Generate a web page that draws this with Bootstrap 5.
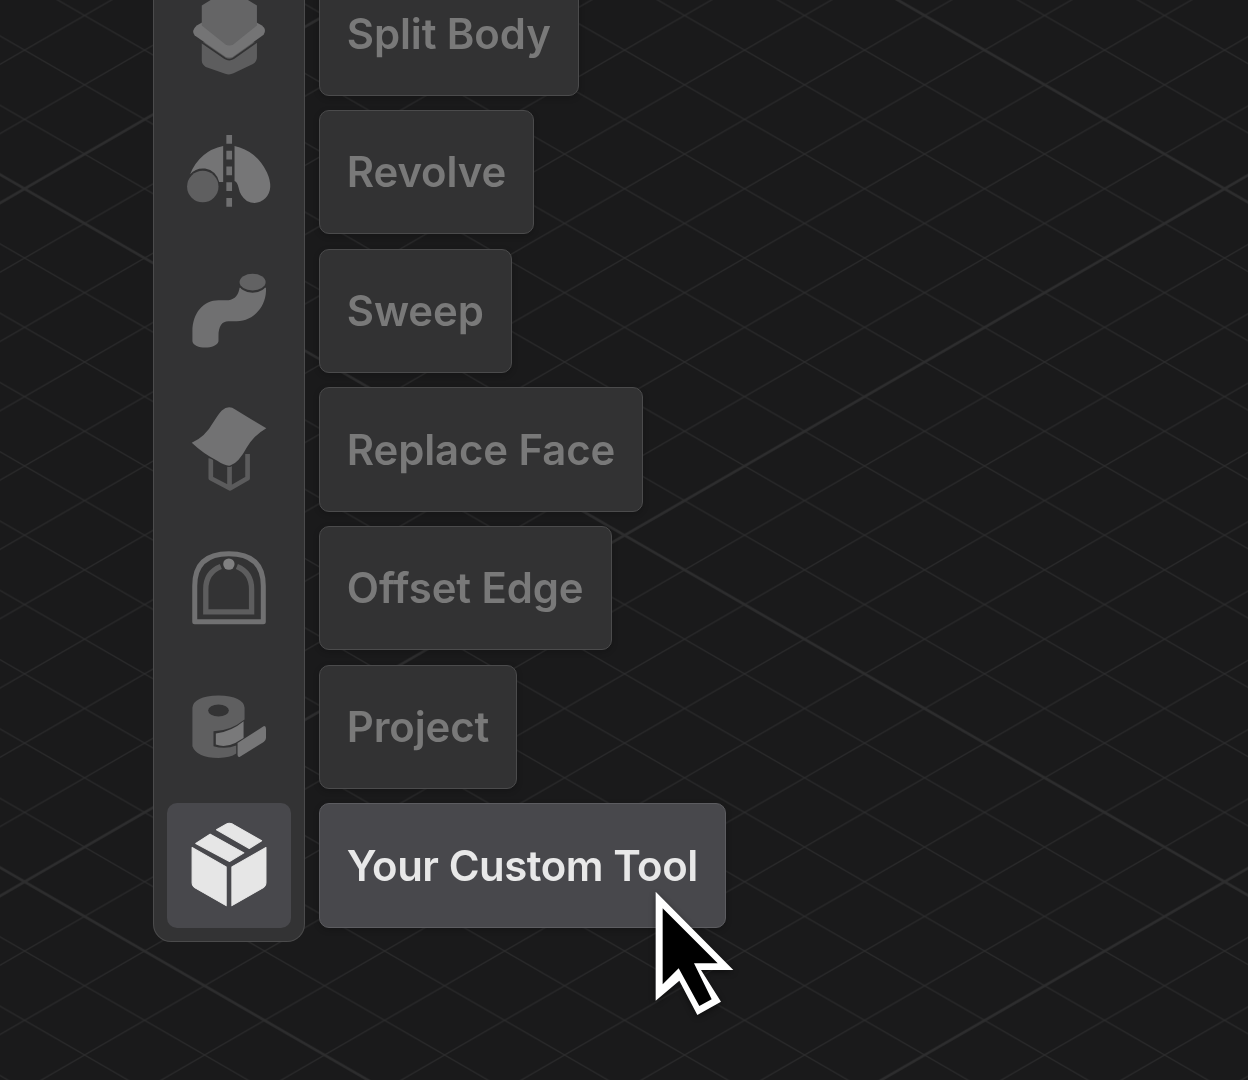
<!doctype html>
<html lang="en"><head>
<meta charset="utf-8"/><meta name="viewport" content="width=device-width,initial-scale=1"/>
<title>Tool menu</title>
<link href="https://cdn.jsdelivr.net/npm/bootstrap@5.3.2/dist/css/bootstrap.min.css" rel="stylesheet">
<style>
html,body{height:100%}
body{background:#1a1a1b;overflow:hidden;font-family:Inter,"Liberation Sans",sans-serif}
.iso-bg{position:fixed;inset:0;width:100%;height:100%;z-index:0}
.tool-stage{position:relative;z-index:1;margin-top:-41.7px;margin-left:153px;gap:14.3px}
.tool-rail{width:152px;padding:13px;gap:14.27px;background:#333334;border:1px solid #4b4b4c;border-top:0;border-radius:0 0 18px 18px}
.rail-slot{width:124.4px;height:124.4px;border-radius:10px}
.rail-slot svg{width:124.4px;height:124.4px}
.rail-slot.is-on{background:#48484c}
.tool-labels{padding-top:13px;gap:14.27px}
.tool-tag{height:124.4px;padding:1px 27px 0 26.5px;background:#323233;border:1px solid #4b4b4c;border-radius:10px;color:#797979;font-size:41.9px;font-weight:600;letter-spacing:-.1px;white-space:nowrap;box-shadow:0 2px 6px rgba(0,0,0,.2)}
.tool-tag.is-on{background:#48484c;border-color:#5c5c60;color:#e8e8e8;letter-spacing:-.45px}
.pointer-mark{position:absolute;left:650px;top:889px;z-index:2;width:90px;height:130px;filter:drop-shadow(0 2px 3px rgba(0,0,0,.45))}
</style>
</head><body>
<svg class="iso-bg" viewBox="0 0 1248 1080" aria-hidden="true">
  <defs>
    <pattern id="isoMinor" width="120" height="69.3" patternUnits="userSpaceOnUse" patternTransform="translate(84.6 15.5)">
      <path d="M0 0L120 69.3M0 69.3L120 0" stroke="#2b2b2c" stroke-width="1.2" fill="none"/>
    </pattern>
    <pattern id="isoMajor" width="1200" height="693" patternUnits="userSpaceOnUse" patternTransform="translate(24.6 188.75)">
      <path d="M0 0L1200 693M0 693L1200 0" stroke="#2d2d2e" stroke-width="2.4" fill="none"/>
    </pattern>
  </defs>
  <rect width="1248" height="1080" fill="url(#isoMinor)"/>
  <rect width="1248" height="1080" fill="url(#isoMajor)"/>
</svg>

<div class="tool-stage d-flex align-items-start">
  <div class="tool-rail d-flex flex-column">
    <div class="rail-slot d-flex align-items-center justify-content-center">
      <svg viewBox="51 -83 372 372"><path d="M155 130V185Q155 197 167 204L225 224Q237 229 250 223L308 195Q320 188 320 175V130Z" fill="#5d5d5e"/><path d="M140 80L228 30Q237 26 246 30L335 80Q350 92 340 108L250 172Q237 180 224 172L134 110Q122 96 140 80Z" fill="#747475"/><path d="M137 118L224 178Q237 186 250 178L338 116" fill="none" stroke="#333334" stroke-width="5"/><path d="M155 20V80L225 136Q237 144 250 136L320 80V20L237-30Z" fill="#656566"/></svg>
    </div>
    <div class="rail-slot d-flex align-items-center justify-content-center">
      <svg viewBox="51 333 372 372"><path d="M219 441Q150 455 120 525Q138 505 165 508Q198 514 207 548L219 548Z" fill="#747475"/><circle cx="158" cy="562" r="47" fill="#5f5f60"/><path d="M253 441Q318 455 350 520Q372 570 345 597Q320 620 290 605Q270 592 265 565Q261 547 253 545Z" fill="#767677"/><path d="M237 408V628" stroke="#6f6f70" stroke-width="17" stroke-dasharray="26 21" fill="none"/></svg>
    </div>
    <div class="rail-slot d-flex align-items-center justify-content-center">
      <svg viewBox="51 -31 372 372"><path d="M127 215C127 160 160 122 205 122L235 122C255 120 265 105 268 85L347 85C350 140 310 185 260 185L235 185C215 185 205 200 205 230L205 245C200 270 130 270 127 245Z" fill="#707071"/><ellipse cx="307" cy="72" rx="41" ry="28" fill="#333334"/><ellipse cx="307" cy="68" rx="39" ry="25" fill="#626263"/></svg>
    </div>
    <div class="rail-slot d-flex align-items-center justify-content-center">
      <svg viewBox="51 385 372 372"><path d="M182 598V658L240 688 292 658V585M238 615V685" fill="none" stroke="#5b5b5c" stroke-width="14" stroke-linejoin="round"/><path d="M215 455Q235 438 255 452Q300 480 348 508Q310 530 290 565Q265 612 240 620Q225 622 200 605Q160 585 125 552Q165 535 190 490Q205 465 215 455Z" fill="#333334" stroke="#333334" stroke-width="8"/><path d="M215 455Q235 438 255 452Q300 480 348 508Q310 530 290 565Q265 612 240 620Q225 622 200 605Q160 585 125 552Q165 535 190 490Q205 465 215 455Z" fill="#727273"/></svg>
    </div>
    <div class="rail-slot d-flex align-items-center justify-content-center">
      <svg viewBox="51 -9 372 372"><path d="M134 277V170Q134 74 236 74Q339 74 339 170V277Z" fill="none" stroke="#717172" stroke-width="15" stroke-linejoin="round"/><path d="M212 112Q167 130 167 180V248H304V180Q304 130 260 112" fill="none" stroke="#5d5d5e" stroke-width="16"/><circle cx="236" cy="105" r="17" fill="#808081"/></svg>
    </div>
    <div class="rail-slot d-flex align-items-center justify-content-center">
      <svg viewBox="51 407 372 372"><path d="M127 535Q130 500 205 498Q280 500 283 535V570Q240 605 190 605V650Q225 660 258 648V672Q240 685 205 685Q140 685 127 650Z" fill="#5f5f60"/><ellipse cx="205" cy="543" rx="31" ry="18" fill="#333334"/><path d="M197 612Q245 605 280 575V625L255 640Q225 655 197 645Z" fill="#79797a"/><path d="M262 640L340 590Q347 588 347 598V625Q347 632 340 637L268 682Q262 684 262 675Z" fill="#767677"/></svg>
    </div>
    <div class="rail-slot is-on d-flex align-items-center justify-content-center">
      <svg viewBox="51 42 372 372"><g fill="#e6e6e6" stroke="#e6e6e6" stroke-width="3" stroke-linejoin="round"><path d="M126 175L228 233V349L135 296Q126 290 126 280Z"/><path d="M347 175V280Q347 290 338 296L245 349V233Z"/><path d="M137 163L180 135 281 191 238 217Z"/><path d="M199 122L228 105Q237 100 247 105L334 155 297 178Z"/></g></svg>
    </div>
  </div>
  <div class="tool-labels d-flex flex-column align-items-start">
    <div class="tool-tag d-flex align-items-center">Split Body</div>
    <div class="tool-tag d-flex align-items-center">Revolve</div>
    <div class="tool-tag d-flex align-items-center">Sweep</div>
    <div class="tool-tag d-flex align-items-center">Replace Face</div>
    <div class="tool-tag d-flex align-items-center">Offset Edge</div>
    <div class="tool-tag d-flex align-items-center">Project</div>
    <div class="tool-tag is-on d-flex align-items-center">Your Custom Tool</div>
  </div>
</div>

<svg class="pointer-mark" viewBox="90 297 270 390" aria-hidden="true">
  <path d="M107 305L340 540 243 540 303 635 232 675 178 572 107 632Z" fill="#fff"/>
  <path d="M128 355L293 520 222 520 275 628 238 648 176 535 128 583Z" fill="#000"/>
</svg>
</body></html>
